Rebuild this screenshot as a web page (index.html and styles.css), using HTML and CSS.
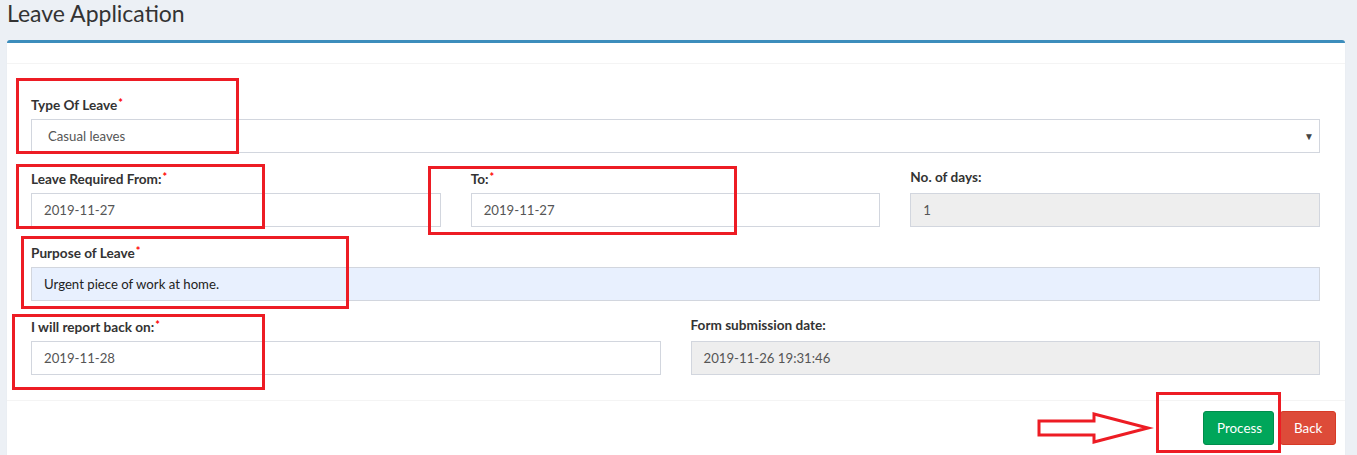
FILE: index.html
```html
<!DOCTYPE html>
<html>
<head>
<meta charset="utf-8">
<link rel="stylesheet" href="styles.css">
</head>
<body>
<div class="page">
  <h1 class="title">Leave Application</h1>
  <div class="box">
    <div class="box-header"></div>
    <div class="box-body">
      <div class="row">
        <div class="col col-12">
          <label class="lbl">Type Of Leave<span class="req">*</span></label>
          <div class="field select">Casual leaves<span class="caret">▼</span></div>
        </div>
      </div>
      <div class="row">
        <div class="col col-4">
          <label class="lbl">Leave Required From:<span class="req">*</span></label>
          <div class="field">2019-11-27</div>
        </div>
        <div class="col col-4">
          <label class="lbl">To:<span class="req">*</span></label>
          <div class="field">2019-11-27</div>
        </div>
        <div class="col col-4">
          <label class="lbl">No. of days:</label>
          <div class="field disabled">1</div>
        </div>
      </div>
      <div class="row">
        <div class="col col-12">
          <label class="lbl">Purpose of Leave<span class="req">*</span></label>
          <div class="field autofill">Urgent piece of work at home.</div>
        </div>
      </div>
      <div class="row">
        <div class="col col-6">
          <label class="lbl">I will report back on:<span class="req">*</span></label>
          <div class="field">2019-11-28</div>
        </div>
        <div class="col col-6">
          <label class="lbl">Form submission date:</label>
          <div class="field disabled">2019-11-26 19:31:46</div>
        </div>
      </div>
    </div>
    <div class="box-footer">
      <button class="btn btn-success">Process</button>
      <button class="btn btn-danger">Back</button>
    </div>
  </div>
</div>

<div class="mark m1"></div>
<div class="mark m2"></div>
<div class="mark m3"></div>
<div class="mark m4"></div>
<div class="mark m5"></div>
<div class="mark m6"></div>
<svg class="arrow" width="120" height="40" viewBox="1036 412 120 40">
  <polygon points="1039,421 1094,421 1094,414 1148,428 1094,442 1094,435 1039,435" fill="#fff" stroke="#ed1c24" stroke-width="3" stroke-linejoin="miter"/>
</svg>
</body>
</html>
```

FILE: styles.css
```css
html, body {
  margin: 0;
  padding: 0;
  background: #ecf0f5;
  font-family: "Source Sans Pro", Lato, "Liberation Sans", sans-serif;
  color: #333;
  overflow: hidden;
}
.page {
  padding: 0 12px 0 7px;
}
.title {
  margin: 0;
  height: 40px;
  font-size: 23px;
  font-weight: 400;
  line-height: 26px;
  color: #333;
}
.box {
  background: #fff;
  border-top: 3px solid #3c8dbc;
  border-radius: 3px 3px 0 0;
  box-shadow: 0 1px 1px rgba(0,0,0,0.1);
}
.box-header {
  height: 20px;
  border-bottom: 1px solid #f4f4f4;
}
.box-body {
  padding: 30px 10px 10px 9px;
}
.row {
  display: flex;
}
.col {
  box-sizing: border-box;
  padding: 0 15px;
  margin-bottom: 15px;
}
.col-12 { width: 100%; }
.col-6 { width: 50%; }
.col-4 { width: 33.3333%; }
.lbl {
  display: block;
  height: 18px;
  line-height: 18px;
  font-size: 13.6px;
  font-weight: 700;
  color: #333;
  margin-bottom: 7px;
}
.req {
  color: #f00;
  font-size: 11px;
  vertical-align: 3px;
  margin-left: 1px;
}
.field {
  box-sizing: border-box;
  height: 34px;
  border: 1px solid #d2d6de;
  padding: 0 12px;
  font-size: 13.2px;
  line-height: 32px;
  color: #555;
  background: #fff;
  position: relative;
}
.field.select {
  padding-left: 16px;
}
.caret {
  position: absolute;
  right: 5px;
  top: 0;
  font-size: 10px;
  color: #444;
}
.field.disabled {
  background: #eee;
}
.field.autofill {
  background: #e8f0fe;
  color: #222;
}
.box-footer {
  border-top: 1px solid #f4f4f4;
  padding: 10px 9px 10px 10px;
  display: flex;
  justify-content: flex-end;
  gap: 6px;
}
.btn {
  height: 34px;
  border: 1px solid transparent;
  border-radius: 3px;
  font-family: inherit;
  font-size: 13.4px;
  color: #fff;
  padding: 0 13px;
  cursor: pointer;
}
.btn-success {
  background: #00a65a;
  border-color: #008d4c;
  width: 71px;
}
.btn-danger {
  background: #dd4b39;
  border-color: #d73925;
  width: 56px;
}
.mark {
  position: absolute;
  box-sizing: border-box;
  border: 3px solid #ed1c24;
}
.m1 { left: 16px; top: 78px; width: 223px; height: 76px; }
.m2 { left: 16px; top: 164px; width: 249px; height: 65px; }
.m3 { left: 428px; top: 166px; width: 309px; height: 69px; }
.m4 { left: 21px; top: 236px; width: 328px; height: 73px; }
.m5 { left: 12px; top: 314px; width: 253px; height: 76px; }
.m6 { left: 1156px; top: 392px; width: 125px; height: 61px; }
.arrow {
  position: absolute;
  left: 1036px;
  top: 412px;
}
```
